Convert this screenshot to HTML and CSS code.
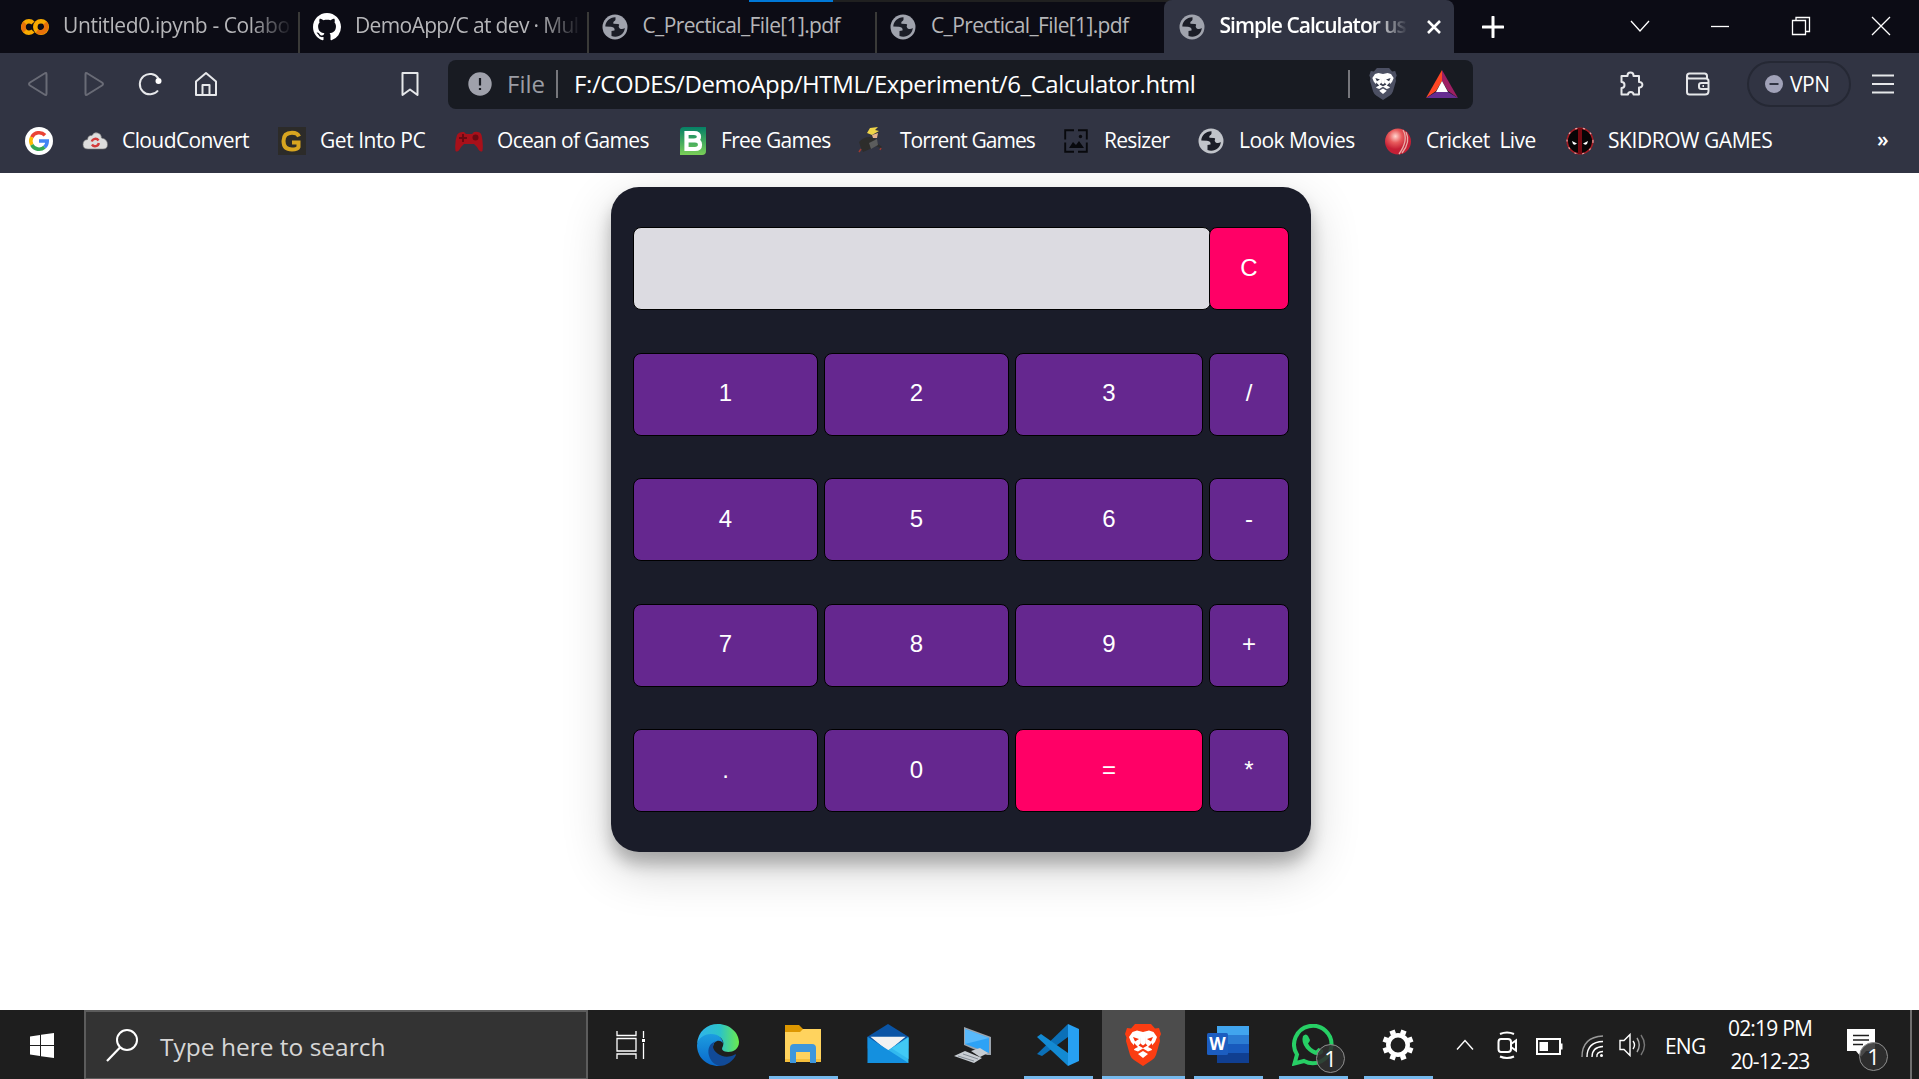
FILE: index.html
```html
<!DOCTYPE html>
<html lang="en">
<head>
<meta charset="utf-8">
<title>Simple Calculator</title>
<link rel="stylesheet" href="styles.css">
</head>
<body>
<svg class="defs" aria-hidden="true">
  <symbol id="globe" viewBox="0 0 26 26">
    <circle cx="13" cy="13" r="12.5"/>
    <path class="land" d="M13.5 3.2C8 3 3.300 7.500 3.300 12.500L9 12.700C12 13 13 14.500 12.500 16.500L9.500 17L9.500 22C16 24.500 22.500 20 22.800 14C21 15.500 18 15.500 17 13.500C16 11.500 18.500 10.500 16 10L11.500 9.800C10.500 7.500 13.500 7 13.500 5.500Z"/>
  </symbol>
  <symbol id="lion" viewBox="0 0 36 42">
    <path class="mane" d="M10 0H26L30 4.500L34 4L36 10L34.500 13.500L35 17L31 31Q30 34 27 36L18 42L9 36Q6 34 5 31L1 17L1.500 13.500L0 10L2 4L6 4.500Z"/>
    <path class="face" d="M12 6.500L18 8L24 6.500L28.500 8L32 13L30 18L26 22.500L27 26L23 27.500L18 24.500L13 27.500L9 26L10 22.500L6 18L4 13L7.500 8Z M18 27L23 30L18 34L13 30Z"/>
    <path class="mark" d="M8 13L14 15L10 17.500Z M28 13L22 15L26 17.500Z M15 12L16 19L13.500 21.500L18 24L22.500 21.500L20 19L21 12L20 20L18 21.500L16 20Z M9 19L13 23L9 25Z M27 19L23 23L27 25Z"/>
  </symbol>
</svg>

<header class="browser">
  <div class="tabstrip">
    <div class="load-line"><i></i></div>
    <div class="tab tab-first">
      <svg class="fav" width="28" height="18" viewBox="0 0 28 18"><g fill="none" stroke-width="4.600"><circle cx="20" cy="9" r="5.700" stroke="#f9ab00"/><path d="M24 5A5.700 5.700 0 0 1 16 13" stroke="#e8710a"/><path d="M12 5A5.700 5.700 0 1 0 12 13" stroke="#f9ab00"/><path d="M4 13A5.700 5.700 0 0 1 4 5" stroke="#e8710a"/></g></svg>
      <span class="fade t-colab">Untitled0.ipynb - Colabo</span>
    </div>
    <div class="tab">
      <svg class="fav" width="28" height="28" viewBox="0 0 16 16"><path fill="#fff" d="M8 0C3.580 0 0 3.580 0 8c0 3.540 2.290 6.530 5.470 7.590.4.070.55-.17.55-.38 0-.19-.01-.82-.01-1.490-2.010.37-2.530-.49-2.690-.94-.09-.23-.48-.94-.82-1.130-.28-.15-.68-.52-.01-.53.63-.01 1.080.58 1.230.82.72 1.210 1.870.87 2.330.66.070-.52.28-.87.51-1.070-1.780-.2-3.640-.89-3.640-3.950 0-.87.31-1.590.82-2.150-.08-.2-.36-1.020.08-2.120 0 0 .67-.21 2.200.82.64-.18 1.320-.27 2-.27s1.360.09 2 .27c1.530-1.040 2.200-.82 2.200-.82.44 1.100.16 1.920.08 2.120.51.56.82 1.270.82 2.150 0 3.070-1.870 3.750-3.650 3.950.29.25.54.73.54 1.480 0 1.070-.01 1.930-.01 2.200 0 .21.15.46.55.38A8.010 8.010 0 0 0 16 8c0-4.420-3.580-8-8-8z"/></svg>
      <span class="fade t-git">DemoApp/C at dev · Mul</span>
    </div>
    <div class="tab tab-file">
      <svg class="fav globe" width="26" height="26"><use href="#globe"/></svg><span>C_Prectical_File[1].pdf</span>
    </div>
    <div class="tab tab-file">
      <svg class="fav globe" width="26" height="26"><use href="#globe"/></svg><span>C_Prectical_File[1].pdf</span>
    </div>
    <div class="tab tab-active">
      <svg class="fav globe" width="26" height="26"><use href="#globe"/></svg><span class="fade t-act">Simple Calculator us</span>
      <svg class="tab-x" width="14" height="14" viewBox="0 0 14 14"><path d="M1 1L13 13M13 1L1 13" stroke="#fff" stroke-width="2.600"/></svg>
    </div>
    <svg class="plus" width="22" height="22" viewBox="0 0 22 22"><path d="M11 1V21M1 11H21" stroke="#fff" stroke-width="3" stroke-linecap="round"/></svg>
    <div class="win">
      <svg width="20" height="20" viewBox="0 0 20 20"><path d="M1 5L10 15L19 5"/></svg>
      <svg width="20" height="20" viewBox="0 0 20 20"><path d="M1 10.500H19"/></svg>
      <svg width="20" height="20" viewBox="0 0 20 20"><path d="M1.500 4.500H14.500V18.500H1.500ZM5 4V1.500H18.500V15.500H15"/></svg>
      <svg width="20" height="20" viewBox="0 0 20 20"><path d="M1 1L19 19M19 1L1 19"/></svg>
    </div>
  </div>

  <div class="toolbar">
    <div class="nav">
      <svg width="24" height="26" viewBox="0 0 24 26" class="dim"><path d="M18.500 2.500Q20.500 1 20.500 3.500V22.500Q20.500 25 18.500 23.500L4 14.500Q2 13 4 11.500Z"/></svg>
      <svg width="24" height="26" viewBox="0 0 24 26" class="dim"><path d="M5.500 2.500Q3.500 1 3.500 3.500V22.500Q3.500 25 5.500 23.500L20 14.500Q22 13 20 11.500Z"/></svg>
      <svg width="24" height="26" viewBox="0 0 24 26"><path d="M20 19.500A10.200 10.200 0 1 1 20.500 7.500"/><circle cx="20.500" cy="10" r="3" fill="#fff" stroke="none"/></svg>
      <svg width="24" height="26" viewBox="0 0 24 26"><path d="M2 10.500L12 2L22 10.500V24H2ZM8.500 24V14H15.500V24"/></svg>
    </div>
    <svg class="bm" width="18" height="26" viewBox="0 0 18 26"><path d="M1.500 2H16.500V24L9 18.500L1.500 24Z"/></svg>
    <div class="url">
      <svg width="24" height="24" viewBox="0 0 24 24"><circle cx="12" cy="12" r="11.700" fill="#9fa1ab"/><path class="alert" d="M12 6V13.500M12 16V18"/></svg>
      <span class="scheme">File</span><i class="bar"></i>
      <span class="address">F:/CODES/DemoApp/HTML/Experiment/6_Calculator.html</span>
      <i class="bar bar-right"></i>
      <svg class="lion-gray" width="28" height="32" preserveAspectRatio="none"><use href="#lion"/></svg>
      <svg class="bat" width="32" height="28" viewBox="0 0 32 28"><path fill="#ff4724" d="M16 0V11L10 21L0 28Z"/><path fill="#9e1f63" d="M16 0L32 28L22 21L16 11Z"/><path fill="#662d91" d="M0 28L10 22H22L32 28Z"/><path fill="#fff" d="M16 11L22 22H10Z"/></svg>
    </div>
    <div class="tools">
      <svg width="26" height="26" viewBox="0 0 26 26"><path d="M4 5H9.500V4.500C9.500 .5 15.500 .5 15.500 4.500V5H21V11C25.500 10.500 25.500 17 21 16.500V23.500H15.500C15.500 20 10 20 10 23.500H3.500V17C7.500 17 7.500 11 3.500 11V5Z"/></svg>
      <svg width="26" height="26" viewBox="0 0 26 26"><path d="M22 8V5Q22 2.500 19.500 2.500H4.500Q2 2.500 2 5V21Q2 23.500 4.500 23.500H20Q23.500 23.500 23.500 20V10Q23.500 7.500 21 7.500H4.500Q2 7.500 2 5M23.500 12H16.500Q14 12 14 14V16Q14 18 16.500 18H23.500M17.500 15H19"/></svg>
      <div class="vpn"><svg width="18" height="18" viewBox="0 0 18 18"><circle cx="9" cy="9" r="9" fill="#a1a2b8" stroke="none"/><path class="dash" d="M4.500 9H13.500"/></svg><span>VPN</span></div>
      <svg class="menu" width="24" height="20" viewBox="0 0 24 20"><path d="M1 1.500H23M1 10H23M1 18.500H23"/></svg>
    </div>
  </div>

  <nav class="bookmarks">
    <a><svg width="28" height="28" viewBox="0 0 28 28"><circle cx="14" cy="14" r="14" fill="#fff"/><g fill="none" stroke-width="3.600"><path d="M20 8.200A8.200 8.200 0 0 0 6.800 10.200" stroke="#ea4335"/><path d="M6.800 10.200A8.200 8.200 0 0 0 6.800 17.900" stroke="#fbbc05"/><path d="M6.800 17.900A8.200 8.200 0 0 0 19.500 20.200" stroke="#34a853"/><path d="M19.500 20.200Q22.200 17.800 22.200 14H14" stroke="#4285f4"/></g></svg></a>
    <a><svg width="28" height="28" viewBox="0 0 28 28"><path fill="#ddd" stroke="#777" stroke-width=".6" d="M7 22Q2 22 2 17.500Q2 13 6.500 12.500Q7 8 11 8.500Q13 4.500 17 6Q20.500 7 20.500 11Q26.500 12 26.500 17.500Q26.500 22 22 22Z"/><path d="M10.800 14.500A3.700 3.700 0 0 1 17.500 13.500M17.800 16A3.700 3.700 0 0 1 11 17.500" fill="none" stroke="#d33a3a" stroke-width="2.400"/></svg><span class="b1">CloudConvert</span></a>
    <a><svg width="28" height="28" viewBox="0 0 28 28"><path fill="#2c2b29" d="M0 0H28V28H0Z"/><path d="M21 9.500Q19.500 5.800 14 5.800Q5.500 5.800 5.500 14Q5.500 22.500 14 22.500Q19.500 22.500 20.500 20V15.500H14" fill="none" stroke="#d8a520" stroke-width="4"/></svg><span class="b2">Get Into PC</span></a>
    <a><svg width="28" height="28" viewBox="0 0 28 28"><path fill="#a8101a" d="M2 8Q4 4.500 9 5L11 7H17L19 5Q25 4 26.500 8Q28.500 16 27.500 24Q25 26 22 20L19 17H9L6 20Q3 26 .5 24Q-.5 15 2 8Z"/><path fill="#6a0a12" d="M4 10H7V7H9V10H12V12H9V15H7V12H4Z"/><circle cx="20.500" cy="10.500" r="3" fill="#6a0a12"/></svg><span class="b3">Ocean of Games</span></a>
    <a><svg width="28" height="28" viewBox="0 0 28 28"><defs><linearGradient id="bg" x2="0" y2="1"><stop stop-color="#058066"/><stop offset="1" stop-color="#7bcf57"/></linearGradient></defs><path fill="url(#bg)" d="M5 0H27V24Q27 28 23 28H1V4Q1 0 5 0Z"/><path fill="none" stroke="#fff" stroke-width="4.200" d="M7.500 6H15Q20 6 20 9.800Q20 13.500 15 13.500H8H16Q21 13.500 21 17.800Q21 22 16 22H7.500ZM7.500 6V22"/></svg><span class="b4">Free Games</span></a>
    <a><svg width="28" height="28" viewBox="0 0 28 28"><path fill="#2d2d2b" d="M1 15Q8 8 16 11L20 17L24 20L22 21L18 19L12 22L5 25L3 21Z"/><path fill="#5b5c5c" d="M11 16L19 12L20 18L13 22Z"/><path fill="#e6b28d" d="M14 8L20 6L19 11L15 11Z"/><path fill="#f0d548" d="M9 6L12 1L20 0L17 3L21 4L14 8Z"/><path stroke="#9c3a30" stroke-width="1.500" d="M1 25L3 22M22 23L23 21"/></svg><span class="b5">Torrent Games</span></a>
    <a><svg width="28" height="28" viewBox="0 0 28 28"><path fill="none" stroke="#08090d" stroke-width="1.900" d="M12 3.200H3.200V12.500M16 3.200H24.800V12.500M3.200 15.500V24.800H12M16 24.800H24.800V15.500"/><path fill="#08090d" d="M7 21L11 15L14 18L17 14L22 21Z"/><circle cx="18.500" cy="9.500" r="1.700" fill="#08090d"/></svg><span class="b6">Resizer</span></a>
    <a><svg class="globe light" width="28" height="26" viewBox="0 0 28 26"><use href="#globe" x="1" width="26" height="26"/></svg><span class="b7">Look Movies</span></a>
    <a><svg width="28" height="28" viewBox="0 0 28 28"><defs><radialGradient id="ball" cx=".4" cy=".3"><stop stop-color="#ffd5ce"/><stop offset=".5" stop-color="#e85b5c"/><stop offset="1" stop-color="#c51f35"/></radialGradient></defs><circle cx="14" cy="14.500" r="13" fill="url(#ball)"/><path d="M19 3Q25 13 15 27M22 5Q27 15 18 26" fill="none" stroke="#e8aba6" stroke-width="1.300"/></svg><span class="b8">Cricket&nbsp; Live</span></a>
    <a><svg width="28" height="28" viewBox="0 0 28 28"><circle cx="14" cy="14" r="12.800" fill="#080506" stroke="#a51e27" stroke-width="1.600"/><circle cx="14" cy="14" r="13" fill="none" stroke="#e7a3a3" stroke-width="1.200" stroke-dasharray="2 6"/><path fill="#780a12" d="M12 1H16V27H12Z"/><path fill="#fff" d="M6 14L11 16.500Q9 18.500 7 17ZM22 14L17 16.500Q19 18.500 21 17Z"/></svg><span class="b9">SKIDROW GAMES</span></a>
    <a class="more">»</a>
  </nav>
</header>

<main class="page">
  <section class="calculator">
    <div class="display"></div><button class="pink">C</button>
    <button>1</button><button>2</button><button>3</button><button>/</button>
    <button>4</button><button>5</button><button>6</button><button>-</button>
    <button>7</button><button>8</button><button>9</button><button>+</button>
    <button>.</button><button>0</button><button class="pink">=</button><button>*</button>
  </section>
</main>

<footer class="taskbar">
  <div class="start"><svg width="24" height="25" viewBox="0 0 24 25"><path fill="#fff" d="M0 3.500L10 2V12H0ZM11 1.800L24 0V12H11ZM0 13H10V23L0 21.500ZM11 13H24V25L11 23.200Z"/></svg></div>
  <div class="search">
    <svg width="34" height="34" viewBox="0 0 34 34"><circle cx="22" cy="12" r="10" fill="none" stroke="#fff" stroke-width="2"/><path d="M15 19.500L2 33" stroke="#fff" stroke-width="2.200"/></svg>
    <span>Type here to search</span>
  </div>
  <div class="taskview"><svg width="30" height="28" viewBox="0 0 30 28"><path fill="none" stroke="#fff" stroke-width="1.300" d="M1 0V4.500H20V0M1 7.500H20V20H1ZM1 28V23H20V28M27.500 0V7M27.500 12V28"/><path fill="#fff" d="M26 8H29V11H26Z"/></svg></div>
  <div class="apps">
    <div class="app"><svg width="42" height="42" viewBox="0 0 42 42"><defs><linearGradient id="e1"><stop stop-color="#2fb2ee"/><stop offset=".55" stop-color="#2cc3c8"/><stop offset="1" stop-color="#6bea4d"/></linearGradient><linearGradient id="e2" x2="0" y2="1"><stop stop-color="#1c9de0"/><stop offset="1" stop-color="#0a68cb"/></linearGradient></defs><path fill="url(#e1)" d="M0 20C1 7 10 0 21 0C33 0 42 9 42 18C42 27 33 29 28 27.500C24 26 25 24 26 22C28 16 23 11 15 11C7 11 2 15 0 20Z"/><path fill="url(#e2)" d="M0 21C1 14 7 10 14 10C22 10 26 15 26 20C26 16 16 14 16 24C16 34 25 41 22 42C9 42 0 33 0 21Z"/><path fill="#114a97" d="M17 18C8 22 10 38 22 42C30 42 36 37 39 31C39 30 38 30 37 31C27 36 17 29 16 23Q16 19 19 17Z"/></svg></div>
    <div class="app running"><svg class="folder" width="38" height="40" viewBox="0 0 38 40"><path fill="#dd9700" d="M1 1H15L19 5V9H1Z"/><path fill="#ffd35e" d="M1 8H16L19 5H37V37H1Z"/><path fill="#f5bf3c" d="M1 35H37V38H1Z"/><path fill="#3e97dc" d="M6 39V24Q6 20 10 20H28Q32 20 32 24V39H26V28H12V39Z"/></svg></div>
    <div class="app"><svg class="mail" width="42" height="39" viewBox="0 0 42 40"><path fill="#0a54a5" d="M0 13L21 0L42 13V25H0Z"/><path fill="#f2f2f2" d="M3 13H39L21 28Z"/><path fill="#32b9ef" d="M42 13V40H0L21 27Z"/><path fill="#1490df" d="M0 13L42 40H0Z"/><path fill="#41c9f5" d="M42 14V36L25 25Z"/></svg></div>
    <div class="app"><svg width="38" height="36" viewBox="0 0 38 36"><path fill="#9ba4ae" d="M10 0L37 10V28L33 28L10 18Z"/><path fill="#2da2f5" d="M11 2L35 11V26L11 17Z"/><path fill="#59b9fb" d="M11 2L35 11L11 17Z"/><path fill="#c8cdd2" d="M17 24L26 21L34 26L26 30ZM0 29L11 24L28 31L20 36Z"/><path stroke="#858d96" d="M4 29L20 34M9 27L24 32" fill="none"/></svg></div>
    <div class="app running"><svg width="42" height="42" viewBox="0 0 42 42"><path fill="#0b70b8" d="M0 30L31 0V13L5 32Z"/><path fill="#138ad3" d="M0 13L4 10L31 29V42Z"/><path fill="#27a0f2" d="M31 0L42 5V37L31 42Z"/></svg></div>
    <div class="app running current"><svg class="lion-color" width="36" height="42"><use href="#lion"/></svg></div>
    <div class="app running"><svg width="42" height="37" viewBox="0 0 42 37"><path fill="#41a5ee" d="M10 0H42V10H10Z"/><path fill="#2b7cd3" d="M10 9H42V19H10Z"/><path fill="#185abd" d="M10 18H42V28H10Z"/><path fill="#103f91" d="M10 27H42V37H10Z"/><rect y="7" width="21" height="22" rx="1.500" fill="#1c5dc0"/><text x="10.500" y="24" class="word">W</text></svg></div>
    <div class="app running"><svg width="42" height="42" viewBox="0 0 42 42"><path fill="none" stroke="#27cf65" stroke-width="4" d="M2.500 39.500L5 30.500A18.700 18.700 0 1 1 12 37Z"/><path fill="#27cf65" d="M11 12Q14 9 16 12L18 16Q18 17 16 19.500Q19 25 24 26.500L26.500 24L31 26Q32 30 27 31Q21 32 14 24.500Q9 18 11 12Z"/></svg><b class="badge">1</b></div>
    <div class="app running"><svg width="32" height="32" viewBox="0 0 32 32"><circle cx="16" cy="16" r="9.700" fill="none" stroke="#fff" stroke-width="4.500"/><path stroke="#fff" stroke-width="5.500" d="M11.500 5.500L10 1.500M20.500 5.500L22 1.500M26.500 11.500L30.500 10M26.500 20.500L30.500 22M11.500 26.500L10 30.500M20.500 26.500L22 30.500M5.500 11.500L1.500 10M5.500 20.500L1.500 22"/></svg></div>
  </div>
  <div class="tray">
    <svg class="up" width="18" height="12" viewBox="0 0 18 12"><path d="M1 10.500L9 1.500L17 10.500"/></svg>
    <svg class="cam" width="22" height="28" viewBox="0 0 22 28"><path stroke-width="2" d="M4 8H11Q14 8 14 11V18Q14 21 11 21H4Q1.500 21 1.500 18V11Q1.500 8 4 8ZM14 13L19 9.500V19.500L14 16M3 3Q10 0 17 3M3 25.500Q10 28.500 17 25.500"/></svg>
    <svg class="bat2" width="27" height="17" viewBox="0 0 27 17"><path stroke-width="2" d="M1 1H24V16H1Z"/><path fill="#fff" stroke="none" d="M3.500 4H12V13H3.500ZM24 5.500H26.500V11.500H24Z"/></svg>
    <svg class="wifi" width="23" height="23" viewBox="0 0 23 23"><path stroke="#999" d="M1 22Q1 2 22 1"/><path d="M6 22Q6 7 22 6.500M11 22Q11 12 22 11.500M16 22Q15 17 22 16.500"/><circle cx="20.500" cy="20.500" r="1.500" fill="#fff" stroke="none"/></svg>
    <svg class="vol" width="27" height="24" viewBox="0 0 27 24"><path d="M1 7.500H5L11 1.500V22.500L5 16.500H1ZM14 8Q17 12 14 16"/><path stroke="#aaa" d="M18 5Q22.500 12 18 19"/><path stroke="#777" d="M22 2Q29 12 22 22"/></svg>
    <span class="lang">ENG</span>
    <div class="clock"><span class="time">02:19 PM</span><span class="date">20-12-23</span></div>
    <div class="notif"><svg width="28" height="28" viewBox="0 0 28 28"><path fill="#fff" stroke="none" d="M0 0H28V22H19L14 28L9 22H0Z"/><path class="lines" d="M6 6.500H22M6 11H22M6 15.500H16"/></svg><b class="badge">1</b></div>
    <i class="peek"></i>
  </div>
</footer>
</body>
</html>
```

FILE: styles.css
```css
* { box-sizing: border-box; }
body { margin: 0; width: 1919px; height: 1079px; overflow: hidden; display: flex; flex-direction: column; background: #fff; font-family: "Open Sans", "Noto Sans", sans-serif; color: #fff; }
svg { display: block; flex: none; }
span { white-space: nowrap; }
.defs { position: absolute; width: 0; height: 0; }

/* browser chrome */
.browser { height: 173px; flex: none; background: #313443; display: flex; flex-direction: column; }
.tabstrip { position: relative; height: 53px; flex: none; display: flex; align-items: center; background: #0c0c15; padding-left: 8px; }
.load-line { position: absolute; left: 749px; top: 0; width: 422px; height: 2px; background: #202020; }
.load-line i { display: block; width: 84px; height: 2px; background: #0078d7; }
.tab { width: 288.5px; height: 53px; flex: none; display: flex; align-items: center; padding-left: 13px; color: #b6b6b9; font-size: 21px; position: relative; }
.tab span { padding-bottom: 3px; }
.tab-first { width: 292px; }
.tab .fav { margin-right: 14px; }
.tab-file { padding-left: 13px; }
.tab-file .fav, .tab-active .fav { margin-right: 15px; }
.tab:not(.tab-active)::after { content: ""; position: absolute; right: 0; top: 12px; width: 2px; height: 41px; background: #3a3a38; }
.tab:nth-child(5)::after { display: none; }
.globe { fill: #a0a3ad; }
.globe .land { fill: #14151d; }
.light { fill: #c1c4ca; }
.land { fill: #1b1d27; }
.fade { overflow: hidden; -webkit-mask-image: linear-gradient(90deg, #000 82%, transparent 101%); mask-image: linear-gradient(90deg, #000 82%, transparent 101%); }
.t-colab { width: 228px; letter-spacing: -.4px; }
.t-git { width: 225px; letter-spacing: -.65px; }
.tab-file span { letter-spacing: -.62px; }
.tab-active { width: 290px; margin-left: -2px; background: #313443; border-radius: 8px 8px 0 0; padding-left: 15px; color: #fff; font-weight: 600; }
.t-act { width: 186px; letter-spacing: -1px; }
.tab-x { margin-left: 21px; }
.plus { margin-left: 28px; }
.win { margin-left: auto; margin-right: 28px; display: flex; gap: 60.500px; padding-bottom: 2px; }
.win svg { fill: none; stroke: #fff; stroke-width: 1.300; }

.toolbar { height: 62px; flex: none; display: flex; align-items: center; padding: 0 24px 0 26px; }
.toolbar svg { fill: none; stroke: #e6e7ea; stroke-width: 2; stroke-linejoin: round; }
.nav { display: flex; gap: 32px; }
.toolbar .dim { stroke: #696b76; }
.bm { margin-left: 183px; }
.url { margin-left: 29px; width: 1025px; height: 49px; border-radius: 8px; background: #181b22; display: flex; align-items: center; padding-left: 20px; font-size: 24px; }
.toolbar .url svg { stroke: none; }
.url .alert { stroke: #181b22; stroke-width: 2.2; }
.vpn .dash { stroke: #313443; }
.url span { padding-bottom: 2px; }
.scheme { margin-left: 15px; width: 49px; color: #9b9da5; }
.bar { width: 2px; height: 28px; background: #76777c; }
.address { margin-left: 16px; width: 774px; letter-spacing: -.4px; }
.lion-gray { margin-left: 19px; --mane: #4c5063; --mark: #34384a; }
.lion-color { --mane: #fb3d12; --mark: #f5340f; }
.mane { fill: var(--mane); }
.face { fill: #fff; }
.mark { fill: var(--mark); }
.bat { margin-left: 29px; }
.tools { margin-left: auto; display: flex; align-items: center; }
.tools > svg:nth-child(2) { margin-left: 41px; }
.vpn { margin-left: 36px; width: 104px; height: 46px; border: 2px solid #252834; border-radius: 23px; display: flex; align-items: center; padding-left: 16px; gap: 7px; font-size: 21px; letter-spacing: -.5px; }
.vpn span { padding-bottom: 1px; }
.menu { margin-left: 20px; }

.bookmarks { height: 52px; display: grid; grid-template-columns: 56px 197px 177px 224px 179px 204px 135px 187px 182px 311px 20px; align-items: center; padding-left: 25px; font-size: 21px; }
.bookmarks a { display: flex; align-items: center; gap: 14px; letter-spacing: -.7px; }
.bookmarks span { padding-bottom: 2px; }
.b1 { letter-spacing: -.6px; margin-left: -1px; }
.b2 { letter-spacing: -.45px; }
.b5 { letter-spacing: -.95px; }
.b7, .b8 { letter-spacing: -.55px; }
.b9 { letter-spacing: -.45px; }
.bookmarks .more { padding-bottom: 5px; font-weight: 600; }

/* calculator */
.page { flex: 1; display: flex; justify-content: center; align-items: flex-start; padding: 14px 0 0 3px; overflow: hidden; }
.calculator { width: 700px; height: 665px; border-radius: 28px; background: #1a1c29; box-shadow: 0 12px 16px rgba(0,0,0,.24), 0 17px 50px rgba(0,0,0,.19); display: grid; grid-template-columns: 185px 185px 188px 80px; grid-auto-rows: 83px; gap: 42.500px 6px; padding: 40px 22px; }
.display { grid-column: span 3; margin-right: -8px; border: 1px solid #000; border-radius: 8px; background: #dcdbe1; }
.calculator button { padding: 0 0 2px; border: 1px solid #000; border-radius: 8px; background: #65278f; color: #fff; font: 24px "Liberation Sans", Arial, sans-serif; position: relative; }
.calculator .pink { background: #ff0066; }

/* taskbar */
.taskbar { height: 69px; flex: none; background: #1e1e1e; display: flex; }
.start { width: 84px; padding: 23px 0 0 30px; }
.search { width: 504px; background: #333; border: 2px solid #5c5c5c; border-bottom-width: 1px; display: flex; align-items: center; padding: 0 0 0 19px; color: #d6d6d6; font-size: 24.500px; }
.search span { margin-left: 21px; padding-top: 2px; }
.taskview { width: 88px; padding: 21px 0 0 28px; }
.apps { display: flex; }
.app { width: 85px; height: 69px; display: flex; align-items: center; justify-content: center; padding-right: 2px; position: relative; }
.folder { margin-top: -2px; }
.mail { margin-top: -3px; }
.running::after { content: ""; position: absolute; left: 8px; right: 8px; bottom: 0; height: 3px; background: #76b9ed; }
.current { background: linear-gradient(90deg, transparent 1px, #4c4c4c 1px, #4c4c4c 84px, transparent 84px); }
.current::after { left: 1px; right: 1px; }
.word { font: 700 17px "Open Sans", sans-serif; fill: #fff; text-anchor: middle; }
.badge { position: absolute; width: 29px; height: 29px; border: 1px solid #8f8f8f; border-radius: 50%; background: rgba(48,48,48,.88); font: 22px/26px "Open Sans", sans-serif; text-align: center; }
.app .badge { left: 45px; top: 34px; }
.tray { flex: 1; display: flex; align-items: center; padding-left: 15px; }
.tray svg { fill: none; stroke: #fff; stroke-width: 1.400; }
.tray .lines { stroke: #1e1e1e; stroke-width: 1.6; }
.cam { margin-left: 23px; }
.bat2 { margin-left: 17px; margin-top: 3px; }
.wifi { margin-left: 18px; margin-top: 3px; }
.vol { margin-left: 15px; }
.lang { width: 40px; margin: 3px 0 0 19px; font-size: 21px; letter-spacing: -.8px; }
.clock { width: 92px; margin-left: 19px; display: flex; flex-direction: column; align-items: center; font-size: 21px; line-height: 33px; letter-spacing: -.8px; }
.notif { position: relative; margin-left: 31px; width: 42px; height: 28px; margin-top: -3px; }
.notif .badge { left: 12px; top: 13px; }
.peek { margin-left: 21px; width: 2px; height: 69px; background: #6f6f6f; }
```
